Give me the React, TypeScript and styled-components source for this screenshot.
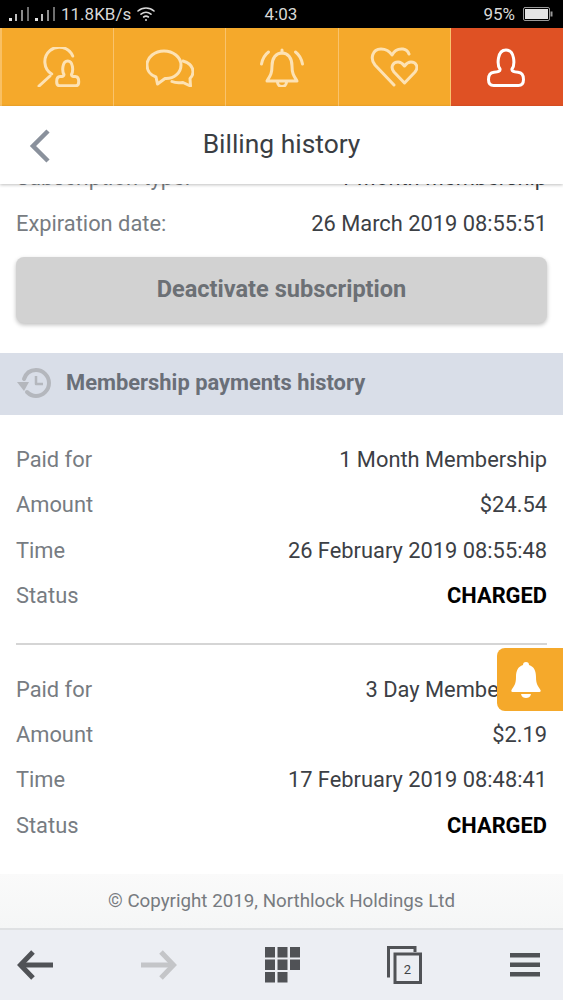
import React from 'react';
import styled, { createGlobalStyle } from 'styled-components';

const GlobalStyle = createGlobalStyle`
  html, body {
    margin: 0;
    padding: 0;
    background: #fff;
    font-family: Roboto, "Liberation Sans", sans-serif;
  }
  * {
    box-sizing: border-box;
  }
`;

const Page = styled.div`
  position: relative;
  display: flex;
  flex-direction: column;
  width: 563px;
  height: 1000px;
  overflow: hidden;
`;

const StatusBar = styled.div`
  display: grid;
  grid-template-columns: 1fr auto 1fr;
  align-items: center;
  height: 28px;
  padding: 0 10px 0 9px;
  background: #000;
  color: #d8d8d8;
  font-size: 17px;
`;

const StatusLeft = styled.div`
  display: flex;
  align-items: center;
  gap: 6px;
`;

const StatusRight = styled.div`
  display: flex;
  align-items: center;
  justify-content: flex-end;
  gap: 8px;
`;

const Tabs = styled.nav`
  display: grid;
  grid-template-columns: repeat(5, 1fr);
  height: 78px;
  background: #f5a92b;
  border-left: 2px solid #f9c063;
`;

const Tab = styled.div<{ $active?: boolean }>`
  display: flex;
  align-items: center;
  justify-content: center;
  background: ${p => (p.$active ? '#df5124' : 'transparent')};
  border-right: 1px solid ${p => (p.$active ? 'transparent' : '#f9c36c')};
  color: ${p => (p.$active ? '#fff' : '#fde2b4')};
`;

const Header = styled.header`
  position: relative;
  z-index: 2;
  display: flex;
  align-items: center;
  justify-content: center;
  height: 78px;
  padding-bottom: 2px;
  background: #fff;
  box-shadow: 0 1px 3px rgba(0, 0, 0, 0.25);
`;

const BackButton = styled.div`
  position: absolute;
  left: 28px;
  top: 23px;
  display: flex;
`;

const HeaderTitle = styled.h1`
  margin: 0;
  font-size: 26.4px;
  font-weight: 400;
  color: #3a3e43;
`;

const Main = styled.main`
  flex: 1;
  overflow: hidden;
`;

const Summary = styled.section`
  margin-top: -29px;
  padding: 0 16px 30px;
`;

const Row = styled.div`
  display: flex;
  align-items: center;
  justify-content: space-between;
  height: 45.4px;
  font-size: 21.85px;
`;

const Label = styled.span`
  color: #777c82;
`;

const Value = styled.span<{ $strong?: boolean }>`
  color: ${p => (p.$strong ? '#000' : '#3c4045')};
  font-weight: ${p => (p.$strong ? 700 : 400)};
`;

const DeactivateButton = styled.button`
  display: block;
  width: 100%;
  height: 66px;
  margin-top: 11px;
  padding: 0 0 2px;
  border: 0;
  border-radius: 8px;
  background: #d2d2d2;
  box-shadow: 0 2px 4px rgba(0, 0, 0, 0.25);
  color: #6c7075;
  font-family: inherit;
  font-size: 23.55px;
  font-weight: 700;
`;

const Band = styled.div`
  display: flex;
  align-items: center;
  gap: 15px;
  height: 62px;
  padding: 0 0 2px 17px;
  background: #d9dee8;
`;

const BandTitle = styled.h2`
  margin: 0;
  font-size: 21.9px;
  font-weight: 700;
  color: #6a6f78;
`;

const Record = styled.section<{ $divided?: boolean }>`
  margin: 0 16px;
  padding: ${p => (p.$divided ? '22px 0 25px' : '21px 0 26px')};
  border-bottom: ${p => (p.$divided ? '2px solid #d5d5d5' : '0')};
`;

const Footer = styled.footer`
  display: flex;
  align-items: center;
  justify-content: center;
  height: 56px;
  background: linear-gradient(#fafafa, #f5f6f6);
  border-bottom: 2px solid #dfe1e3;
  color: #777b80;
  font-size: 18.75px;
`;

const BottomBar = styled.div`
  display: flex;
  align-items: center;
  justify-content: space-between;
  height: 70px;
  padding: 0 23px 0 17px;
  background: #eceef3;
`;

const FloatingBell = styled.div`
  position: absolute;
  right: 0;
  top: 648px;
  display: flex;
  align-items: center;
  justify-content: center;
  width: 66px;
  height: 63px;
  padding-right: 8px;
  border-radius: 8px 0 0 8px;
  background: #f5a92b;
`;

const Icon = styled.svg.attrs<React.SVGProps<SVGSVGElement>>(p => ({
  fill: p.fill ?? 'none',
  stroke: p.stroke ?? 'currentColor',
  strokeLinecap: p.strokeLinecap ?? 'round',
  strokeLinejoin: p.strokeLinejoin ?? 'round',
}))`
  display: block;
  flex: none;
`;

const TabIcon = ({ children }: { children: React.ReactNode }) => (
  <Icon width="48" height="40" viewBox="0 0 48 40" strokeWidth="3">
    {children}
  </Icon>
);

const personPath =
  'M18 22C15 18 15 3 24 3C33 3 33 18 30 22C29.5 24.5 32 25 36 25.3C40 25.6 41.5 28.5 41.5 32.5C41.5 37 39.3 38.5 36.3 38.5L11.7 38.5C8.7 38.5 6.5 37 6.5 32.5C6.5 28.5 8 25.6 12 25.3C16 25 18.5 24.5 18 22Z';

const SignalBars = () => (
  <Icon width="20" height="16" viewBox="0 0 20 16" stroke="none">
    <rect x="0" y="12" width="3" height="3" fill="#e4e4e4" />
    <rect x="6" y="8" width="2" height="7" fill="#bdbdbd" />
    <rect x="12" y="4" width="2" height="11" fill="#8d8d8d" />
    <rect x="18" y="1" width="2" height="14" fill="#6f6f6f" />
  </Icon>
);

const WifiIcon = () => (
  <Icon width="18" height="16" viewBox="0 0 18 16" strokeWidth="1.6">
    <path d="M1 5C5.5 1 12.5 1 17 5" />
    <path d="M4 8.2C7 5.8 11 5.8 14 8.2" />
    <path d="M6.6 11C8 10 10 10 11.4 11" />
    <circle cx="9" cy="14" r="1" fill="currentColor" stroke="none" />
  </Icon>
);

const BatteryIcon = () => (
  <Icon width="30" height="14" viewBox="0 0 30 14" stroke="none">
    <rect x="0.5" y="0.5" width="26" height="13" rx="1.5" stroke="#9a9a9a" fill="none" />
    <rect x="2" y="2" width="23" height="10" fill="#e4e4e4" />
    <rect x="27.5" y="4.5" width="2" height="5" fill="#9a9a9a" />
  </Icon>
);

const HistoryIcon = () => (
  <Icon width="34" height="32" viewBox="0 0 34 32" stroke="#b4b7bd" strokeWidth="4">
    <path d="M7 12C9 6 13 3 19 3C26 3 32 9 32 16C32 23 26 29 19 29C15.5 29 12.5 27.5 10 25" />
    <path d="M0 15L12 15L7 24Z" fill="#b4b7bd" stroke="none" />
    <path d="M19 9V17H26" strokeWidth="2.5" strokeLinecap="butt" />
  </Icon>
);

const BellSolid = () => (
  <Icon width="30" height="36" viewBox="0 0 30 36" stroke="none">
    <path
      d="M15 0C17 0 18 1.2 18 3C23 4.5 25 9 25 15C25 22 27 24 29.5 28C30 29 29.5 30 28.5 30L1.5 30C0.5 30 0 29 0.5 28C3 24 5 22 5 15C5 9 7 4.5 12 3C12 1.2 13 0 15 0Z"
      fill="#fff"
    />
    <path d="M10 32L20 32C19.5 35 17 36 15 36C13 36 10.5 35 10 32Z" fill="#fff" />
  </Icon>
);

const LeftArrow = () => (
  <Icon width="36" height="30" viewBox="0 0 36 30" stroke="#505256" strokeWidth="5" strokeLinecap="butt" strokeLinejoin="miter">
    <path d="M36 15H4" />
    <path d="M16 2L3.5 15L16 28" />
  </Icon>
);

const RightArrow = () => (
  <Icon width="36" height="30" viewBox="0 0 36 30" stroke="#c4c5c8" strokeWidth="5" strokeLinecap="butt" strokeLinejoin="miter">
    <path d="M0 15H32" />
    <path d="M20 2L32.5 15L20 28" />
  </Icon>
);

const GridIcon = () => (
  <Icon width="35" height="36" viewBox="0 0 35 36" stroke="none" fill="#505256">
    {[0, 12.5, 25].map(y =>
      [0, 12.5, 25].map(x =>
        y === 25 && x === 25 ? null : <rect key={`${x}-${y}`} x={x} y={y} width="10" height="10.5" />
      )
    )}
  </Icon>
);

const PagesIcon = () => (
  <Icon width="35" height="38" viewBox="0 0 35 38" stroke="#505256" strokeWidth="3" strokeLinecap="butt" strokeLinejoin="miter">
    <path d="M3 30H1.5V1.5H28V6" />
    <rect x="8" y="8" width="25.5" height="28.5" />
    <text x="20.5" y="28" fontSize="13" fill="#3f4145" stroke="none" textAnchor="middle" fontFamily="Roboto, sans-serif">
      2
    </text>
  </Icon>
);

const MenuIcon = () => (
  <Icon width="30" height="24" viewBox="0 0 30 24" stroke="none" fill="#505256">
    <rect y="0" width="30" height="4.5" />
    <rect y="9.5" width="30" height="4.5" />
    <rect y="19" width="30" height="4.5" />
  </Icon>
);

interface Payment {
  plan: string;
  amount: string;
  time: string;
}

const payments: Payment[] = [
  { plan: '1 Month Membership', amount: '$24.54', time: '26 February 2019 08:55:48' },
  { plan: '3 Day Membership', amount: '$2.19', time: '17 February 2019 08:48:41' },
];

export default function App() {
  return (
    <Page>
      <GlobalStyle />
      <StatusBar>
        <StatusLeft>
          <SignalBars />
          <SignalBars />
          <span>11.8KB/s</span>
          <WifiIcon />
        </StatusLeft>
        <span>4:03</span>
        <StatusRight>
          <span>95%</span>
          <BatteryIcon />
        </StatusRight>
      </StatusBar>
      <Tabs>
        <Tab>
          <TabIcon>
            <path d="M38.7 9A14.5 14.5 0 1 0 17.7 27" />
            <path d="M16 29L5 39" />
            <g transform="translate(33.7 14) scale(0.63 0.7) translate(-24 -3)">
              <path d={personPath} vectorEffect="non-scaling-stroke" />
            </g>
          </TabIcon>
        </Tab>
        <Tab>
          <TabIcon>
            <path d="M10 30L11.5 37L19 31.5C28 32 35 26 35 18C35 10 27 4 18 4C9 4 1 10 1 18C1 23 4 28 10 30Z" />
            <path d="M37 14C44 16 47 20 47 25C47 28 45.5 30 44 31.5L44.5 39L37 35.5C33 36 29 36 26 34.5" />
          </TabIcon>
        </Tab>
        <Tab>
          <TabIcon>
            <path d="M9 34C12 29 14 27 14 19C14 11 18 6 24 6C30 6 34 11 34 19C34 27 36 29 39 34Z" />
            <path d="M24 6V3" />
            <path d="M19.5 35A4.5 4.5 0 0 0 28.5 35" />
            <path d="M3.5 17C4.5 12 6.5 8 10.5 5" />
            <path d="M44.5 17C43.5 12 41.5 8 37.5 5" />
          </TabIcon>
        </Tab>
        <Tab>
          <TabIcon>
            <path d="M24 38L5 18C0 12 2 2 11 2C16 2 20 5 22 8C24 4 28 1.5 33 2C36 2.5 38 4 39 7" />
            <path d="M34.5 36L24 25C20 20 23 15 28 15C31 15 33 17 34.5 19C36 17 38 15 41 15C46 15 49 20 45 25Z" />
          </TabIcon>
        </Tab>
        <Tab $active>
          <TabIcon>
            <path d={personPath} />
          </TabIcon>
        </Tab>
      </Tabs>
      <Header>
        <BackButton>
          <Icon width="24" height="34" viewBox="0 0 24 34" stroke="#8a919c" strokeWidth="4.5" strokeLinecap="butt" strokeLinejoin="miter">
            <path d="M20 2L5 17L20 32" />
          </Icon>
        </BackButton>
        <HeaderTitle>Billing history</HeaderTitle>
      </Header>
      <Main>
        <Summary>
          <Row>
            <Label>Subscription type:</Label>
            <Value>1 Month Membership</Value>
          </Row>
          <Row>
            <Label>Expiration date:</Label>
            <Value>26 March 2019 08:55:51</Value>
          </Row>
          <DeactivateButton>Deactivate subscription</DeactivateButton>
        </Summary>
        <Band>
          <HistoryIcon />
          <BandTitle>Membership payments history</BandTitle>
        </Band>
        {payments.map((payment, index) => (
          <Record key={payment.time} $divided={index < payments.length - 1}>
            <Row>
              <Label>Paid for</Label>
              <Value>{payment.plan}</Value>
            </Row>
            <Row>
              <Label>Amount</Label>
              <Value>{payment.amount}</Value>
            </Row>
            <Row>
              <Label>Time</Label>
              <Value>{payment.time}</Value>
            </Row>
            <Row>
              <Label>Status</Label>
              <Value $strong>CHARGED</Value>
            </Row>
          </Record>
        ))}
      </Main>
      <Footer>© Copyright 2019, Northlock Holdings Ltd</Footer>
      <BottomBar>
        <LeftArrow />
        <RightArrow />
        <GridIcon />
        <PagesIcon />
        <MenuIcon />
      </BottomBar>
      <FloatingBell>
        <BellSolid />
      </FloatingBell>
    </Page>
  );
}
